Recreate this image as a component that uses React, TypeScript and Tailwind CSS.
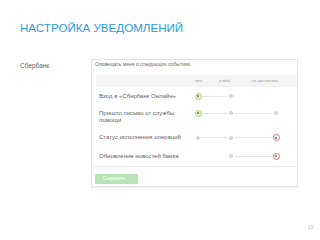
type Mark = 'none' | 'off' | 'green' | 'red';

interface EventRow {
  lines: string[];
  marks: [Mark, Mark, Mark];
  height: string;
  radioTop: string;
}

const rows: EventRow[] = [
  { lines: ['Вход в «Сбербанк Онлайн»'], marks: ['green', 'off', 'none'], height: 'h-[18px]', radioTop: 'pt-[5px]' },
  { lines: ['Пришло письмо от службы', 'помощи'], marks: ['green', 'off', 'off'], height: 'h-[24px]', radioTop: 'pt-[4px]' },
  { lines: ['Статус исполнения операций'], marks: ['off', 'off', 'red'], height: 'h-[17px]', radioTop: 'pt-[5px]' },
  { lines: ['Обновление новостей банка'], marks: ['none', 'off', 'red'], height: 'h-[20px]', radioTop: 'pt-[6px]' },
];

function Radio({ mark }: { mark: Mark }) {
  if (mark === 'none') return null;
  if (mark === 'off') {
    return <div className="w-[4px] h-[4px] rounded-full bg-[#e2e2e2] border border-[#cfcfcf]" />;
  }
  const ring = mark === 'green' ? 'border-[#a9d86b] bg-[#e2f3c9]' : 'border-[#e06a6a] bg-white';
  return (
    <div className={`w-[7px] h-[7px] rounded-full border ${ring} flex items-center justify-center`}>
      <div className="w-[2px] h-[2px] rounded-full bg-[#666]" />
    </div>
  );
}

function Connector({ show, width }: { show: boolean; width: string }) {
  return <div className={`${width} h-px ${show ? 'bg-[#e6e6e6]' : 'bg-transparent'}`} />;
}

function Row({ row }: { row: EventRow }) {
  const [a, b, c] = row.marks;
  return (
    <div className={`flex ${row.height}`}>
      <div className="w-[102px] pl-[7px] flex flex-col justify-center text-[6px] leading-[7px] text-[#636363]">
        {row.lines.map((l) => (
          <div key={l} className="whitespace-nowrap">{l}</div>
        ))}
      </div>
      <div className={`flex items-start ${row.lines.length > 1 ? row.radioTop : 'items-center'}`}>
        <div className={`flex items-center ${row.lines.length > 1 ? 'h-[8px]' : 'h-full'}`}>
          <div className="w-[8px] flex justify-center"><Radio mark={a} /></div>
          <Connector show={a !== 'none' && b !== 'none'} width="w-[25px]" />
          <div className="w-[8px] flex justify-center"><Radio mark={b} /></div>
          <Connector show={b !== 'none' && c !== 'none'} width="w-[37px]" />
          <div className="w-[8px] flex justify-center"><Radio mark={c} /></div>
        </div>
      </div>
    </div>
  );
}

export default function App() {
  return (
    <div className="w-[320px] h-[240px] bg-white overflow-hidden font-['Liberation_Sans',Arial,sans-serif]">
      <div className="pt-[21px] pl-[20px] text-[11.6px] leading-[14px] text-[#2d9bd5]">
        НАСТРОЙКА УВЕДОМЛЕНИЙ
      </div>

      <div className="flex mt-[24px]">
        <div className="w-[91px] pl-[20px] pt-[3px] text-[6.5px] leading-[8px] text-[#636363]">Сбербанк</div>

        <div className="w-[207px] border border-[#e3e3e3] shadow-[0_1px_1px_rgba(0,0,0,0.05)]">
          <div className="pl-[3px] h-[8px] text-[5px] leading-[8px] text-[#6a6a6a] whitespace-nowrap">
            Оповещать меня о следующих событиях
          </div>

          <div className="ml-[4px] mt-[7px] h-[12px] bg-[#f4f4f4] flex items-center text-[4px] leading-[6px] text-[#999]">
            <div className="w-[99px]" />
            <div className="w-[24px]">sms</div>
            <div className="w-[33px]">e-mail</div>
            <div>не доставлять</div>
          </div>

          {rows.map((r, i) => (
            <Row key={i} row={r} />
          ))}

          <div className="mx-[2px] border-t border-[#ececec]" />

          <div className="pt-[7px] pb-[2px] pl-[3px]">
            <div className="w-[43px] h-[10px] rounded-[1px] bg-[#b9e3b9] text-[4.5px] leading-[10px] text-white pl-[8px]">
              Сохранить
            </div>
          </div>
        </div>
      </div>

      <div className="flex justify-end pr-[7px] mt-[37px] text-[5px] leading-[6px] text-[#bbb]">13</div>
    </div>
  );
}
